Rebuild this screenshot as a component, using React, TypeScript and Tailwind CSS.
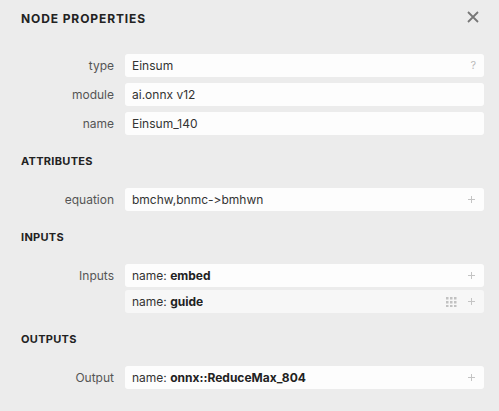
import React from "react";

const Plus = () => (
  <svg width="9" height="9" viewBox="0 0 9 9" className="shrink-0">
    <path d="M4.5 1v7M1 4.5h7" stroke="#c4c4c4" strokeWidth="1" />
  </svg>
);

const Grip = () => (
  <svg width="11" height="10" viewBox="0 0 11 10" className="shrink-0">
    {[0, 4, 8].map((x) =>
      [0, 4, 8].map((y) => (
        <rect key={`${x}-${y}`} x={x} y={y} width="2.5" height="2.5" fill="#c2c2c2" />
      ))
    )}
  </svg>
);

function Box({
  children,
  right,
  muted,
}: {
  children: React.ReactNode;
  right?: React.ReactNode;
  muted?: boolean;
}) {
  return (
    <div
      className={`flex h-[23px] flex-1 items-center justify-between rounded-[3px] pl-[7px] pr-[8px] text-[12px] text-[#333] ${
        muted ? "bg-[#f7f7f7]" : "bg-[#fdfdfd]"
      }`}
    >
      <span className="truncate">{children}</span>
      <span className="flex items-center gap-[10px]">{right}</span>
    </div>
  );
}

function Row({
  label,
  children,
}: {
  label?: string;
  children: React.ReactNode;
}) {
  return (
    <div className="flex items-center gap-[11px]">
      <div className="w-[99px] shrink-0 text-right text-[12px] text-[#555]">{label}</div>
      {children}
    </div>
  );
}

function Heading({ children }: { children: React.ReactNode }) {
  return (
    <div className="pl-[6px] pt-[19px] pb-[20px] text-[11px] font-bold leading-[14px] tracking-[0.3px] text-[#222]">
      {children}
    </div>
  );
}

export default function App() {
  return (
    <div
      className="h-[411px] w-[499px] overflow-hidden bg-[#ececec] px-[15px] [font-feature-settings:'calt'_0,'liga'_0]"
      style={{ fontFamily: "Inter, 'Noto Sans', sans-serif" }}
    >
      <div className="flex h-[54px] items-start justify-between pl-[6px] pt-[11px]">
        <div className="text-[12px] font-bold leading-[16px] tracking-[0.9px] text-[#222]">
          NODE PROPERTIES
        </div>
        <svg width="12" height="12" viewBox="0 0 12 12" className="mr-[5px] mt-[0px]">
          <path d="M1 1L11 11M11 1L1 11" stroke="#777" strokeWidth="1.8" />
        </svg>
      </div>

      <div className="flex flex-col gap-[6px]">
        <Row label="type">
          <Box right={<span className="text-[11px] text-[#bbb]">?</span>}>Einsum</Box>
        </Row>
        <Row label="module">
          <Box>ai.onnx v12</Box>
        </Row>
        <Row label="name">
          <Box>Einsum_140</Box>
        </Row>
      </div>

      <Heading>ATTRIBUTES</Heading>
      <Row label="equation">
        <Box right={<Plus />}>bmchw,bnmc-&gt;bmhwn</Box>
      </Row>

      <Heading>INPUTS</Heading>
      <div className="flex flex-col gap-[3px]">
        <Row label="Inputs">
          <Box right={<Plus />}>
            name: <b className="font-bold text-[#222]">embed</b>
          </Box>
        </Row>
        <Row>
          <Box
            muted
            right={
              <>
                <Grip />
                <Plus />
              </>
            }
          >
            name: <b className="font-bold text-[#222]">guide</b>
          </Box>
        </Row>
      </div>

      <Heading>OUTPUTS</Heading>
      <Row label="Output">
        <Box right={<Plus />}>
          name: <b className="font-bold text-[#222]">onnx::ReduceMax_804</b>
        </Box>
      </Row>
    </div>
  );
}
